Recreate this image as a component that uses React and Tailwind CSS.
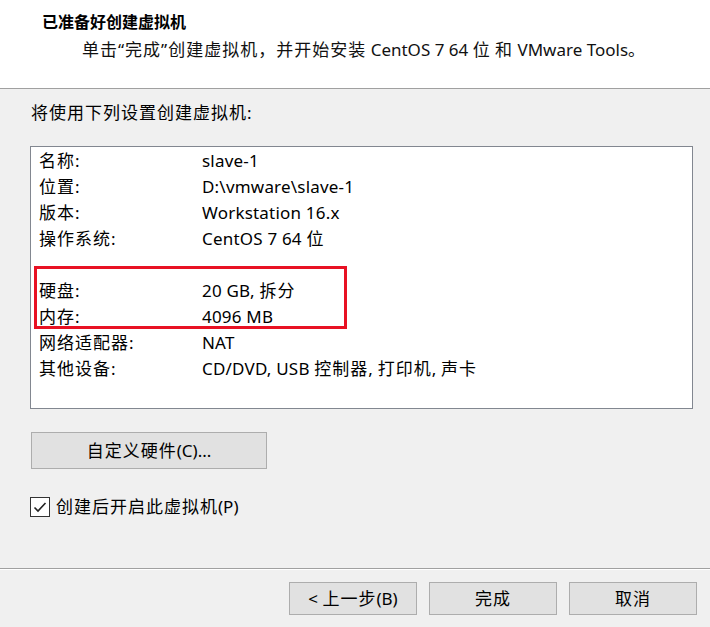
import React from "react";

const CJK = /([\u3000-\u9fff\uff00-\uffef\u201c\u201d]+)/;

function T({ children }) {
  const parts = String(children).split(CJK);
  return (
    <>
      {parts.map((p, i) =>
        p === "" ? null : CJK.test(p) ? (
          <span key={i} className="tracking-[1px]">{p}</span>
        ) : (
          <span key={i}>{p}</span>
        )
      )}
    </>
  );
}

const rows = [
  ["名称:", "slave-1"],
  ["位置:", "D:\\vmware\\slave-1"],
  ["版本:", "Workstation 16.x"],
  ["操作系统:", "CentOS 7 64 位"],
  ["", ""],
  ["硬盘:", "20 GB, 拆分"],
  ["内存:", "4096 MB"],
  ["网络适配器:", "NAT"],
  ["其他设备:", "CD/DVD, USB 控制器, 打印机, 声卡"],
];

export default function App() {
  const font = { fontFamily: '"Noto Sans", "Noto Sans CJK SC", sans-serif' };
  return (
    <div
      className="w-[710px] h-[627px] bg-[#f0f0f0] flex flex-col text-[17px] text-black relative overflow-hidden"
      style={font}
    >
      <div className="h-[89px] shrink-0 bg-white border-b border-[#a0a0a0] pl-[42px] pt-[9px]">
        <div className="font-bold leading-[26px] text-[16px]">已准备好创建虚拟机</div>
        <div className="pl-[40px] mt-[2px] leading-[26px] text-[#111] whitespace-nowrap">
          <T>单击“完成”创建虚拟机，并开始安装 CentOS 7 64 位 和 VMware Tools。</T>
        </div>
      </div>

      <div className="pl-[30px] flex flex-col">
        <div className="mt-[12px] leading-[24px] pl-[1px]"><T>将使用下列设置创建虚拟机:</T></div>

        <div className="relative mt-[21px] w-[663px] h-[263px] bg-white border border-[#828790] pt-[1px] pl-[8px]">
          {rows.map(([k, v], i) => (
            <div key={i} className="flex h-[26px] items-center leading-[26px] whitespace-nowrap">
              <div className="w-[163px] shrink-0"><T>{k}</T></div>
              <div className="tracking-[0.2px]"><T>{v}</T></div>
            </div>
          ))}
          <div className="absolute left-[3px] top-[119px] w-[313px] h-[63px] border-[3px] border-[#e81123]" />
        </div>

        <button className="mt-[23px] w-[236px] h-[37px] bg-[#e1e1e1] border border-[#adadad] text-center leading-[34px] text-[17px] ml-[1px]">
          <T>自定义硬件(C)...</T>
        </button>

        <div className="mt-[27px] flex items-center h-[21px]">
          <div className="w-[20px] h-[20px] border border-[#333] bg-white flex items-center justify-center">
            <svg width="14" height="14" viewBox="0 0 14 14">
              <path d="M1.5 7.5 L5 11 L12.5 3" fill="none" stroke="#222" strokeWidth="1.6" />
            </svg>
          </div>
          <span className="ml-[6px] leading-[21px]"><T>创建后开启此虚拟机(P)</T></span>
        </div>
      </div>

      <div className="mt-auto">
        <div className="h-[1px] bg-[#a0a0a0]" />
        <div className="h-[1px] bg-white" />
        <div className="flex justify-end gap-[12px] pr-[13px] pt-[12px] pb-[12px]">
          <button className="w-[128px] h-[33px] bg-[#e1e1e1] border border-[#adadad] leading-[31px] text-center"><T>&lt; 上一步(B)</T></button>
          <button className="w-[128px] h-[33px] bg-[#e1e1e1] border border-[#adadad] leading-[31px] text-center"><T>完成</T></button>
          <button className="w-[128px] h-[33px] bg-[#e1e1e1] border border-[#adadad] leading-[31px] text-center"><T>取消</T></button>
        </div>
      </div>
    </div>
  );
}
